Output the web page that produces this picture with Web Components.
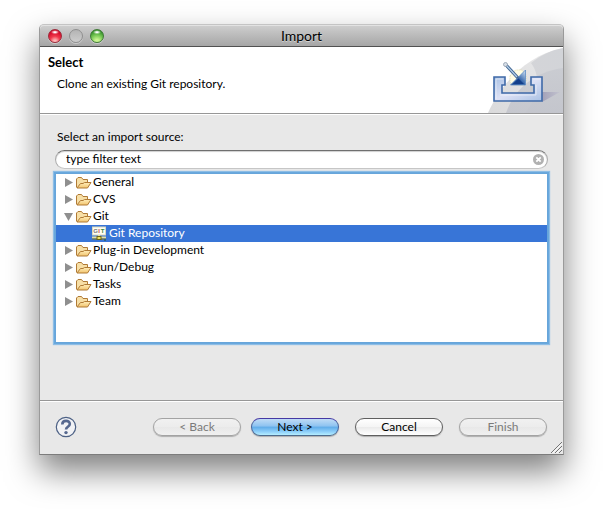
<!DOCTYPE html>
<html lang="en">
<head>
<meta charset="utf-8">
<title>Import</title>
<style>
  html { background: #fff; }
  body {
    margin: 0;
    box-sizing: border-box;
    min-height: 100vh;
    padding: 24px 39px 54px;
    display: flex;
    flex-direction: column;
    color: #000;
    font: 12px/17px Lato, "Noto Sans", sans-serif;
  }
</style>
</head>
<body>
<import-window>
  <title-bar slot="title">Import</title-bar>
  <wizard-banner slot="banner">
    <span slot="heading">Select</span>
    Clone an existing Git repository.
  </wizard-banner>
  <filtered-tree label="Select an import source:" value="type filter text">
    <tree-node label="General"></tree-node>
    <tree-node label="CVS"></tree-node>
    <tree-node label="Git" open>
      <tree-node label="Git Repository" leaf selected></tree-node>
    </tree-node>
    <tree-node label="Plug-in Development"></tree-node>
    <tree-node label="Run/Debug"></tree-node>
    <tree-node label="Tasks"></tree-node>
    <tree-node label="Team"></tree-node>
  </filtered-tree>
  <wizard-footer slot="footer">
    <push-button slot="step" disabled>&lt; Back</push-button>
    <push-button slot="step" primary>Next &gt;</push-button>
    <push-button>Cancel</push-button>
    <push-button disabled>Finish</push-button>
  </wizard-footer>
</import-window>

<script>
class Base extends HTMLElement {
  constructor() {
    super();
    this.attachShadow({ mode: "open" });
  }
  connectedCallback() {
    if (!this.shadowRoot.firstChild) this.shadowRoot.innerHTML = this.render();
  }
}

customElements.define("import-window", class extends Base {
  render() {
    return `<style>
      :host {
        flex: 1; display: flex; flex-direction: column; box-sizing: border-box;
        border: 1px solid #9a9a9a; border-top-color: #c4c4c4; border-bottom-color: #7c7c7c;
        border-radius: 5px 5px 0 0; background: #e8e8e8;
        box-shadow: 0 16px 32px rgba(0,0,0,.5);
      }
      main { flex: 1; display: flex; flex-direction: column; padding: 14px 15px 57px; }
    </style>
    <slot name="title"></slot>
    <slot name="banner"></slot>
    <main><slot></slot></main>
    <slot name="footer"></slot>`;
  }
});

customElements.define("title-bar", class extends Base {
  render() {
    return `<style>
      :host {
        display: grid; grid-template-columns: 1fr auto 1fr; align-items: center;
        height: 21px; padding: 0 8px; border-bottom: 1px solid #515151;
        border-radius: 4px 4px 0 0; background: linear-gradient(#cfcfcf, #a6a6a6);
        box-shadow: inset 0 1px #e2e2e2; font-size: 14px; line-height: 20px;
      }
      h1 { margin: 0; font: inherit; text-shadow: 0 1px rgba(255,255,255,.45); }
      div { display: flex; gap: 7px; }
      button {
        width: 14px; height: 14px; padding: 0; border: 1px solid; border-radius: 50%;
        box-shadow: 0 1px rgba(255,255,255,.4);
      }
      .close { border-color: #9b2a3a; background: radial-gradient(ellipse 4px 2px at 50% 18%, #fff 20%, transparent), radial-gradient(circle at 50% 95%, #ffb8b8 10%, #f03a4c 40%, #d40a2a 75%); }
      .min { border-color: #8f8f8f; background: linear-gradient(#b4b4b4, #cdcdcd); }
      .zoom { border-color: #3f7a35; background: radial-gradient(ellipse 4px 2px at 50% 18%, #fff 20%, transparent), radial-gradient(circle at 50% 95%, #c8f590 15%, #75c653 50%, #35902a 80%); }
    </style>
    <div>
      <button class="close" aria-label="Close"></button>
      <button class="min" aria-label="Minimize" disabled></button>
      <button class="zoom" aria-label="Zoom"></button>
    </div>
    <h1><slot></slot></h1>`;
  }
});

customElements.define("wizard-banner", class extends Base {
  render() {
    return `<style>
      :host {
        display: flex; justify-content: space-between; min-height: 66px;
        background: #fff; border-bottom: 1px solid #979797; box-shadow: 0 1px #fff;
      }
      .copy { padding: 7px 8px; }
      h2 { margin: 0 0 4px; font-size: 13px; line-height: 17px; font-weight: 700; }
      p { margin: 0; padding-left: 9px; }
      svg { display: block; flex: none; }
    </style>
    <div class="copy"><h2><slot name="heading"></slot></h2><p><slot></slot></p></div>
    <svg width="75" height="66" viewBox="0 0 75 66" aria-hidden="true">
      <defs>
        <linearGradient id="a" x1="0" y1="1" x2="1" y2="0"><stop offset="0" stop-color="#dadadb"/><stop offset="1" stop-color="#e9e9ea"/></linearGradient>
        <linearGradient id="b" x1="0" y1="1" x2="1" y2="0"><stop offset="0" stop-color="#d5d5d8"/><stop offset="1" stop-color="#d2d4d8"/></linearGradient>
        <linearGradient id="c" x1="0" y1="0" x2="0" y2="1"><stop offset="0" stop-color="#c8cad0"/><stop offset="1" stop-color="#c0c2ca"/></linearGradient>
        <linearGradient id="d" x1="0" y1="0" x2="1" y2="1"><stop offset="0" stop-color="#a9c1e4"/><stop offset=".5" stop-color="#dde1f5"/><stop offset="1" stop-color="#a9c1e4"/></linearGradient>
        <linearGradient id="e" x1="0" y1="1" x2="1" y2="0"><stop offset="0" stop-color="#16458e"/><stop offset=".5" stop-color="#3767ab"/><stop offset="1" stop-color="#d8ebfa"/></linearGradient>
        <linearGradient id="f" x1="0" y1="0" x2="1" y2="0"><stop offset="0" stop-color="#a3a1b8"/><stop offset="1" stop-color="#c3c3cf"/></linearGradient>
      </defs>
      <path d="M0 66C10 43 34 9 75 1V66Z" fill="url(#a)"/>
      <path d="M43 16C53 8 64 3 75 1V66H37C50 50 54 31 43 16Z" fill="url(#b)"/>
      <path d="M18 66C26 43 45 25 75 21V66Z" fill="url(#c)" opacity=".8"/>
      <path d="M54 45H72L54 55Z" fill="url(#f)"/>
      <path d="M22 29L25 25L28 23H34L38 28V34L36 38H25L22 35Z" fill="#fffde4" stroke="#dedcae" stroke-dasharray="1 1"/>
      <path d="M37.500 23V38H22.500Z" fill="url(#e)" stroke="#5d8bc4" stroke-width=".8"/>
      <path d="M25 37L30.500 31.500L36 37Z" fill="#123f8a"/>
      <path d="M18 18L30 31" stroke="#416692" stroke-width="3.200"/>
      <path d="M18 18L29 30" stroke="#b4d0ea" stroke-width="1.200"/>
      <circle cx="17.500" cy="17.500" r="2" fill="#d5dde6" stroke="#8e9cac" stroke-width=".8"/>
      <path d="M6 30H17V38H14V46H46V38H43V30H54V54H6Z" fill="url(#d)" stroke="#3f69a8" stroke-width="1.600"/>
      <path d="M8 52V32H15M12 48H48V38M45 32H52" fill="none" stroke="#fff" stroke-opacity=".5"/>
    </svg>`;
  }
});

customElements.define("filtered-tree", class extends Base {
  render() {
    return `<style>
      :host { flex: 1; display: flex; flex-direction: column; }
      label { padding: 0 2px; margin-bottom: 5px; }
      .field {
        display: flex; align-items: center; box-sizing: border-box; height: 19px;
        padding: 0 3px 0 10px; border: 1px solid #a9a9a9; border-top-color: #6f6f6f;
        border-bottom-color: #c6c6c6; border-radius: 10px; background: #fff;
        box-shadow: inset 0 1px 1px #cfcfcf;
      }
      input { flex: 1; min-width: 0; height: 17px; box-sizing: border-box; padding: 0 0 2px; border: 0; outline: 0; background: none; color: inherit; font: inherit; }
      button { display: flex; padding: 0; border: 0; background: none; }
      ul {
        flex: 1; margin: 4px 0 0; padding: 0; list-style: none; background: #fff;
        border: 1px solid #67a5da; box-shadow: 0 0 0 1px #69a8dd, 0 0 1px 2px #8dbde5;
      }
    </style>
    <label for="filter">${this.getAttribute("label")}</label>
    <div class="field">
      <input id="filter" type="text" value="${this.getAttribute("value")}">
      <button aria-label="Clear filter"><svg width="11" height="11" viewBox="0 0 11 11"><circle cx="5.500" cy="5.500" r="5.500" fill="#b1b1b1"/><path d="M3.300 3.300L7.700 7.700M7.700 3.300L3.300 7.700" stroke="#fff" stroke-width="1.800"/></svg></button>
    </div>
    <ul role="tree"><slot></slot></ul>`;
  }
});

customElements.define("tree-node", class extends Base {
  render() {
    const open = this.hasAttribute("open"), leaf = this.hasAttribute("leaf");
    const arrow = leaf ? "" : `<button aria-label="${open ? "Collapse" : "Expand"}"><svg width="9" height="10" viewBox="0 0 9 10"><path d="${open ? "M0 1H9L4.500 9Z" : "M1 0L9 4.500L1 9Z"}" fill="#8f8f8f"/></svg></button>`;
    const folder = `<svg width="16" height="14" viewBox="0 0 16 14">
      <defs><linearGradient id="g" x1="0" y1="0" x2="0" y2="1"><stop offset="0" stop-color="#ffedb8"/><stop offset="1" stop-color="#f2c46e"/></linearGradient></defs>
      <path d="M.5 11.500V3L2 1.500H5.500L7 3.500H11.500V6" fill="#f7dfa6" stroke="#b07a35"/>
      <path d="M1 12L4.500 7.500H7L8.500 6.500H15L11.500 12Z" fill="url(#g)" stroke="#b07a35"/></svg>`;
    const git = `<svg width="16" height="16" viewBox="0 0 16 16">
      <rect x=".5" y="1" width="13" height="8" fill="#fffef2" stroke="#dcdabd"/>
      <g font-family="Liberation Sans, sans-serif" font-size="6" font-weight="700" text-anchor="middle"><text x="3.500" y="7" fill="#777">G</text><text x="7" y="7" fill="#c44">I</text><text x="10.500" y="7" fill="#38854a">T</text></g>
      <path d="M0 11.500H14M7 9V11" stroke="#e3dfa6" stroke-width="2"/><path d="M0 13H14" stroke="#77722f"/>
      <rect x="5" y="10.500" width="4" height="3" fill="#efe15a" stroke="#6b6418"/>
      <path d="M12 13H14V15H12Z" fill="#2f6580"/></svg>`;
    return `<style>
      :host { display: block; }
      .row { display: flex; align-items: center; height: 17px; padding-left: ${leaf ? 36 : 8}px; ${this.hasAttribute("selected") ? "background: #3875d7; color: #fff;" : ""} }
      button { display: flex; width: 12px; padding: 0; border: 0; background: none; }
      svg { display: block; flex: none; }
      span { padding: 0 0 2px 1px; }
      ul { margin: 0; padding: 0; list-style: none; }
    </style>
    <li role="treeitem" ${leaf ? "" : `aria-expanded="${open}"`} aria-selected="${this.hasAttribute("selected")}">
      <div class="row">${arrow}${leaf ? git : folder}<span>${this.getAttribute("label")}</span></div>
      <ul role="group"><slot></slot></ul>
    </li>`;
  }
});

customElements.define("push-button", class extends Base {
  render() {
    const off = this.hasAttribute("disabled"), main = this.hasAttribute("primary");
    const look = off
      ? "border-color: #a3a3a3; color: #7b7b7b; background: linear-gradient(#f1f1f1, #ececec 50%, #e8e8e8 50%, #f0f0f0);"
      : main
      ? "border-color: #4638a4 #46629a #4d6a8c; background: linear-gradient(#c0dcf6, #8dc2f0 45%, #5fabe8 50%, #8fd0fa 80%, #b5eeff);"
      : "border-color: #5f5f5f; background: linear-gradient(#fff, #f5f5f5 48%, #ebebeb 52%, #fff);";
    return `<style>
      :host { display: block; }
      button {
        box-sizing: border-box; display: block; width: 88px; height: 18px; padding: 0;
        border: 1px solid; border-radius: 9px; color: #000; font: inherit; line-height: 16px;
        box-shadow: 0 1px 1px rgba(0,0,0,.25); ${look}
      }
    </style><button ${off ? "disabled" : ""}><slot></slot></button>`;
  }
});

customElements.define("wizard-footer", class extends Base {
  render() {
    return `<style>
      :host {
        display: grid; grid-template-columns: 1fr auto; box-sizing: border-box;
        min-height: 54px; border-top: 1px solid #979797; box-shadow: inset 0 1px #fff;
        padding: 0 16px 1px 15px; align-items: center; position: relative;
      }
      .help { display: flex; width: 22px; padding: 0; border: 0; background: none; }
      .actions, .steps { display: flex; }
      .actions { gap: 16px; }
      .steps { gap: 10px; }
      .grip { position: absolute; right: 1px; bottom: 1px; }
    </style>
    <button class="help" aria-label="Help"><svg width="22" height="22" viewBox="0 0 22 22">
      <circle cx="11" cy="11" r="9.700" fill="#f1f2f5" stroke="#4d6185" stroke-width="1.200"/>
      <path d="M7.300 8.500C7.300 3.800 14.800 3.800 14.800 8C14.800 10.700 11 10.700 11 13.500" fill="none" stroke="#56688f" stroke-width="2.600"/>
      <circle cx="11" cy="16.600" r="1.700" fill="#56688f"/></svg></button>
    <div class="actions"><div class="steps"><slot name="step"></slot></div><slot></slot></div>
    <svg class="grip" width="11" height="11" viewBox="0 0 11 11" aria-hidden="true"><path d="M0 11L11 0M4 11L11 4M8 11L11 8" stroke="#747474"/><path d="M1.500 11L11 1.500M5.500 11L11 5.500" stroke="#fff"/></svg>`;
  }
});
</script>
</body>
</html>
